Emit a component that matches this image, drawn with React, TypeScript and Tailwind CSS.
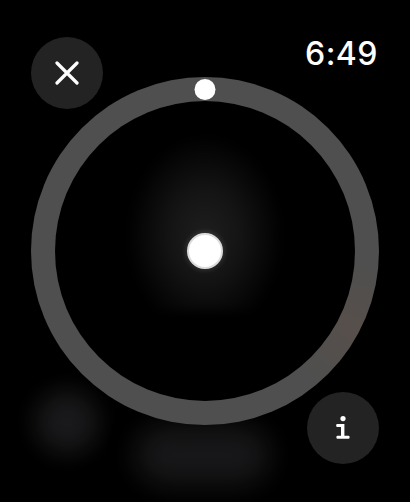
import React from "react";

function CloseButton() {
  return (
    <div className="w-[72px] h-[72px] rounded-full bg-[#232323] flex items-center justify-center">
      <svg width="24" height="24" viewBox="0 0 24 24" fill="none">
        <path d="M2 2 L22 22 M22 2 L2 22" stroke="white" strokeWidth="3.2" strokeLinecap="round" />
      </svg>
    </div>
  );
}

function InfoButton() {
  return (
    <div className="w-[72px] h-[72px] rounded-full bg-[#232323] flex items-center justify-center">
      <svg width="14" height="24" viewBox="0 0 14 24" fill="white">
        <circle cx="7" cy="2.6" r="2.6" />
        <path d="M1.2 8 H8.4 V19.8 H12.4 Q13.6 19.8 13.6 21 V21.6 Q13.6 22.8 12.4 22.8 H1.6 Q0.4 22.8 0.4 21.6 V21 Q0.4 19.8 1.6 19.8 H5 V11 H1.2 Q0.2 11 0.2 10 V9 Q0.2 8 1.2 8 Z" />
      </svg>
    </div>
  );
}

export default function App() {
  return (
    <div
      className="relative w-[410px] h-[502px] overflow-hidden bg-black flex flex-col"
      style={{ fontFamily: "Inter, 'Liberation Sans', sans-serif" }}
    >
      {/* background blurs */}
      <div className="absolute left-[35px] top-[390px] w-[64px] h-[64px] rounded-full bg-[#1c1c1e] blur-[12px] opacity-90" />
      <div className="absolute left-[135px] top-[425px] w-[135px] h-[60px] rounded-full bg-[#1a1a1c] blur-[14px] opacity-90" />

      {/* top bar */}
      <div className="relative z-10 flex items-start justify-between pl-[31px] pr-[32px] pt-[37px]">
        <CloseButton />
        <div className="text-white text-[32px] font-medium leading-[40px] tracking-[0.5px] -mt-[3px]">6:49</div>
      </div>

      {/* ring */}
      <div className="flex justify-center -mt-[32px]">
        <div className="relative w-[348px] h-[348px] rounded-full bg-[conic-gradient(#4f4f4f_0deg,#4f4f4f_95deg,#574f4b_118deg,#4f4f4f_140deg,#4f4f4f_360deg)] flex items-center justify-center">
          <div className="relative w-[300px] h-[300px] rounded-full bg-black flex items-center justify-center overflow-hidden">
            <div className="absolute left-[60px] top-[20px] w-[180px] h-[190px] bg-[radial-gradient(ellipse_78px_100px_at_50%_60%,#1e1e1e_0%,#141414_45%,rgba(0,0,0,0)_100%)] blur-[4px]" />
            <div className="relative w-[36px] h-[36px] rounded-full bg-white border-2 border-[#dcdcdc] shadow-[0_0_6px_rgba(255,255,255,0.2)]" />
          </div>
          <div className="absolute left-1/2 top-[2px] -translate-x-1/2 w-[21px] h-[21px] rounded-full bg-white" />
        </div>
      </div>

      {/* bottom bar */}
      <div className="relative z-10 flex justify-end pr-[31px] -mt-[33px]">
        <InfoButton />
      </div>
    </div>
  );
}
